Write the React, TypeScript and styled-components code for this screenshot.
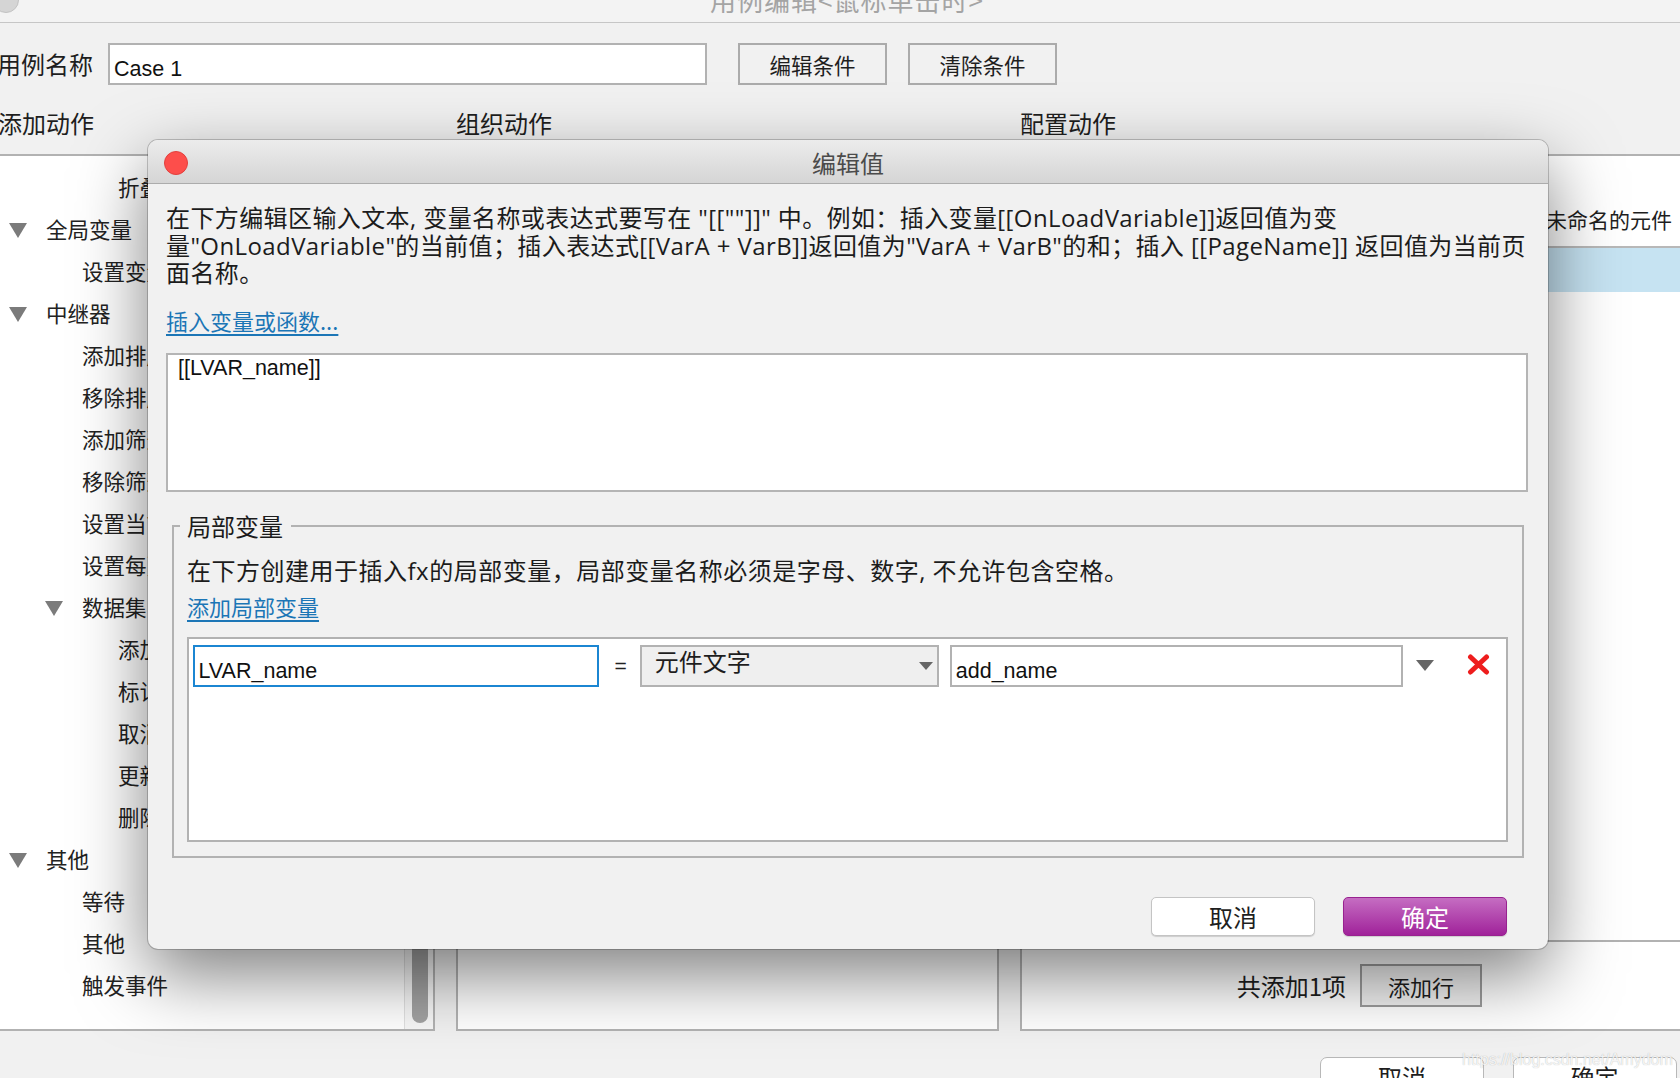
import React from 'react';
import styled, { createGlobalStyle } from 'styled-components';

const CJK = `"Noto Sans CJK SC", "Noto Sans", sans-serif`;
const LATIN = `"Liberation Sans", "Noto Sans CJK SC", sans-serif`;
const TEXT = `"Open Sans", "Noto Sans CJK SC", sans-serif`;

const GlobalStyle = createGlobalStyle`
  html, body { margin: 0; padding: 0; }
  body { background: #f1f1f1; }
  * { box-sizing: border-box; }
`;

type TreeItem = {
    label: string;
    level: number;
    open?: boolean;
};

const treeItems: Array<TreeItem> = [
    { label: '折叠全部', level: 2 },
    { label: '全局变量', level: 0, open: true },
    { label: '设置变量值', level: 1 },
    { label: '中继器', level: 0, open: true },
    { label: '添加排序', level: 1 },
    { label: '移除排序', level: 1 },
    { label: '添加筛选', level: 1 },
    { label: '移除筛选', level: 1 },
    { label: '设置当前显示页面', level: 1 },
    { label: '设置每页项目数量', level: 1 },
    { label: '数据集', level: 1, open: true },
    { label: '添加行', level: 2 },
    { label: '标记行', level: 2 },
    { label: '取消标记', level: 2 },
    { label: '更新行', level: 2 },
    { label: '删除行', level: 2 },
    { label: '其他', level: 0, open: true },
    { label: '等待', level: 1 },
    { label: '其他', level: 1 },
    { label: '触发事件', level: 1 },
];

/* ---------- background window ---------- */

const Screen = styled.div`
    position: relative;
    width: 1680px;
    height: 1078px;
    overflow: hidden;
    background: #f1f1f1;
    font-family: ${CJK};
    color: #1e1e1e;
`;

const WindowTitleBar = styled.div`
    display: flex;
    height: 23px;
    border-bottom: 1px solid #c6c6c6;
    background: #f3f3f3;
`;

const WindowDot = styled.span`
    flex: none;
    width: 26px;
    height: 26px;
    margin: -13px 0 0 -7px;
    border-radius: 50%;
    background: #d5d5d5;
    border: 1px solid #c2c2c2;
`;

const WindowTitle = styled.div`
    flex: 1;
    margin-top: -13px;
    padding-right: 5px;
    text-align: center;
    font-size: 26px;
    line-height: 26px;
    letter-spacing: 1px;
    color: #a4a4a4;
    white-space: nowrap;
`;

const NameRow = styled.div`
    display: flex;
    align-items: center;
    height: 62px;
    padding-top: 20px;
`;

const NameLabel = styled.span`
    margin: 0 15px 0 -3px;
    font-size: 24px;
    line-height: 30px;
    white-space: nowrap;
`;

const Field = styled.div<{ $width: number }>`
    display: flex;
    align-items: center;
    width: ${(p) => p.$width}px;
    height: 42px;
    padding: 11px 4px 0;
    border: 2px solid #b2b2b2;
    background: #fff;
    font-family: ${LATIN};
    font-size: 21.5px;
    color: #111;
    white-space: nowrap;
`;

const ToolButton = styled.button<{ $gap: number }>`
    width: 149px;
    height: 42px;
    margin-left: ${(p) => p.$gap}px;
    border: 2px solid #ababab;
    background: transparent;
    font-family: ${CJK};
    font-size: 21.5px;
    color: #1e1e1e;
    padding: 0;
`;

const Columns = styled.div`
    display: grid;
    grid-template-columns: 437px 543px 680px;
    column-gap: 21px;
    margin-left: -2px;
`;

const Column = styled.div`
    display: flex;
    flex-direction: column;
`;

const ColumnTitle = styled.div`
    display: flex;
    align-items: center;
    height: 69px;
    padding-top: 7px;
    font-size: 24px;
    line-height: 30px;
    white-space: nowrap;
`;

const Panel = styled.div`
    display: flex;
    height: 877px;
    border: 2px solid #b2b2b2;
    background: #fff;
    overflow: hidden;
`;

const ColumnPanel = styled(Panel)`
    flex-direction: column;
`;

const Tree = styled.div`
    flex: 1;
    padding-top: 9px;
`;

const TreeRow = styled.div<{ $level: number }>`
    display: flex;
    align-items: center;
    height: 42px;
    padding-left: ${(p) => 9 + p.$level * 36}px;
    font-size: 21.5px;
    white-space: nowrap;
    color: #222;
`;

const Caret = styled.span`
    flex: none;
    width: 0;
    height: 0;
    margin: 4px 19px 0 0;
    border-left: 9px solid transparent;
    border-right: 9px solid transparent;
    border-top: 15px solid #7b7b7b;
`;

const CaretSpace = styled.span`
    flex: none;
    width: 37px;
`;

const ScrollTrack = styled.div`
    display: flex;
    flex-direction: column;
    width: 29px;
    padding: 0 5px 6px 7px;
    border-left: 1px solid #e0e0e0;
    background: #f7f7f7;
`;

const ScrollThumb = styled.div`
    margin-top: auto;
    height: 420px;
    border-radius: 8px;
    background: #a2a2a2;
`;

const ListToolbar = styled.div`
    height: 44px;
`;

const ListHeader = styled.div`
    display: flex;
    align-items: center;
    height: 48px;
    padding: 0 0 8px 524px;
    border-bottom: 2px solid #b8b8b8;
    font-size: 21px;
    white-space: nowrap;
`;

const SelectedRow = styled.div`
    height: 44px;
    background: #c6e3f2;
`;

const ElementList = styled.div`
    flex: 1;
    display: flex;
    flex-direction: column;
    border-bottom: 2px solid #b2b2b2;
`;

const ListFooter = styled.div`
    display: flex;
    align-items: center;
    justify-content: flex-end;
    gap: 14px;
    height: 87px;
    padding-right: 216px;
    font-size: 24px;
    white-space: nowrap;
`;

const AddRowButton = styled.button`
    width: 122px;
    height: 43px;
    padding: 0;
    border: 2px solid #9c9c9c;
    background: #f0f0f0;
    font-family: ${CJK};
    font-size: 22px;
    color: #1e1e1e;
`;

const Footer = styled.div`
    display: flex;
    justify-content: flex-end;
    gap: 28.5px;
    padding: 26px 3.5px 0 0;
`;

const FooterButton = styled.button`
    width: 164px;
    height: 40px;
    padding: 0;
    border: 1px solid #b8b8b8;
    border-radius: 7px;
    background: #fff;
    font-family: ${CJK};
    font-size: 24px;
    line-height: 1;
    color: #1e1e1e;
`;

const Watermark = styled.span`
    position: absolute;
    left: 1462px;
    top: 1051px;
    font-family: ${LATIN};
    font-size: 16px;
    line-height: 18px;
    color: rgba(255, 255, 255, 0.85);
    text-shadow: 0 0 1px rgba(0, 0, 0, 0.3);
    white-space: nowrap;
`;

/* ---------- dialog ---------- */

const Dialog = styled.div`
    position: absolute;
    left: 148px;
    top: 140px;
    width: 1400px;
    height: 809px;
    display: flex;
    flex-direction: column;
    overflow: hidden;
    border-radius: 10px;
    background: #f1f1f1;
    box-shadow: 0 26px 70px rgba(0, 0, 0, 0.5), 0 0 0 1px rgba(0, 0, 0, 0.2);
`;

const DialogTitleBar = styled.div`
    display: grid;
    grid-template-columns: 1fr auto 1fr;
    align-items: center;
    flex: none;
    height: 44px;
    padding-top: 2px;
    border-bottom: 1px solid #acacac;
    background: linear-gradient(#ececec, #d5d5d5);
`;

const CloseDot = styled.span`
    width: 24px;
    height: 24px;
    margin-left: 16px;
    border-radius: 50%;
    background: #fd4e4b;
    border: 1px solid #e2403d;
`;

const DialogTitle = styled.span`
    font-size: 24px;
    line-height: 30px;
    color: #4b4b4b;
`;

const DialogBody = styled.div`
    flex: 1;
    display: flex;
    flex-direction: column;
    padding: 20px 20px 0 18px;
`;

const Description = styled.div`
    font-family: ${TEXT};
    font-size: 24px;
    line-height: 27.5px;
    letter-spacing: 0.4px;
    color: #1c1c1c;
    white-space: nowrap;
`;

const LinkText = styled.a<{ $top: number }>`
    align-self: flex-start;
    margin-top: ${(p) => p.$top}px;
    font-family: ${CJK};
    font-size: 22px;
    line-height: 28px;
    color: #1c76b6;
    text-decoration: underline;
    text-underline-offset: 4px;
    white-space: nowrap;
    cursor: pointer;
`;

const Editor = styled.textarea`
    flex: none;
    margin-top: 19px;
    width: 100%;
    height: 139px;
    padding: 2px 10px;
    border: 2px solid #b5b5b5;
    background: #fff;
    font-family: ${LATIN};
    font-size: 21.5px;
    line-height: 22px;
    color: #111;
    resize: none;
    outline: none;
`;

const GroupBox = styled.fieldset`
    min-width: 0;
    margin: 20px 4px 0 6px;
    padding: 17px 14px 14px 13px;
    border: 2px solid #b2b2b2;
`;

const GroupLegend = styled.legend`
    margin-left: -7px;
    padding: 0 8px 0 7px;
    font-size: 24px;
    line-height: 28px;
    color: #1c1c1c;
`;

const GroupText = styled.div`
    font-family: ${TEXT};
    font-size: 24px;
    line-height: 28px;
    letter-spacing: 0.5px;
    color: #1c1c1c;
    white-space: nowrap;
`;

const GroupLink = styled(LinkText)`
    display: inline-block;
`;

const VarList = styled.div`
    margin-top: 16px;
    height: 205px;
    padding: 6px 0 0 3.5px;
    border: 2px solid #b2b2b2;
    background: #fff;
`;

const VarRow = styled.div`
    display: flex;
    align-items: center;
    height: 42px;
`;

const NameField = styled(Field)`
    border-color: #1b86d2;
`;

const Equals = styled.span`
    padding: 0 13px 0 16px;
    font-family: ${LATIN};
    font-size: 21px;
    color: #222;
`;

const Select = styled.div`
    display: flex;
    align-items: center;
    width: 299px;
    height: 42px;
    padding: 0 4px 0 13px;
    border: 2px solid #b2b2b2;
    background: #efefef;
`;

const SelectText = styled.span`
    margin-bottom: 10px;
    font-size: 24px;
    line-height: 28px;
    white-space: nowrap;
`;

const Arrow = styled.span<{ $size: number; $left: number }>`
    flex: none;
    width: 0;
    height: 0;
    margin-left: ${(p) => (p.$left < 0 ? 'auto' : `${p.$left}px`)};
    border-left: ${(p) => p.$size / 2}px solid transparent;
    border-right: ${(p) => p.$size / 2}px solid transparent;
    border-top: ${(p) => Math.round(p.$size * 0.6)}px solid #666;
`;

const ValueField = styled(Field)`
    margin-left: 11px;
`;

const DeleteIcon = styled.svg`
    flex: none;
    margin-left: 33px;
    margin-bottom: 2px;
`;

const DialogButtons = styled.div`
    display: flex;
    justify-content: flex-end;
    gap: 28px;
    margin: auto 21px 13px 0;
`;

const DialogButton = styled.button<{ $primary?: boolean }>`
    width: 164px;
    height: 39px;
    padding: 0;
    border-radius: 5px;
    border: 1px solid ${(p) => (p.$primary ? '#98228f' : '#c4c4c4')};
    background: ${(p) => (p.$primary ? 'linear-gradient(#c56dc2, #a0229a)' : '#fff')};
    box-shadow: 0 1px 1px rgba(0, 0, 0, 0.15);
    font-family: ${CJK};
    font-size: 24px;
    line-height: 1;
    color: ${(p) => (p.$primary ? '#fff' : '#1e1e1e')};
`;

const App = () => {
    return (
        <>
            <GlobalStyle />
            <Screen>
                <WindowTitleBar>
                    <WindowDot />
                    <WindowTitle>用例编辑&lt;鼠标单击时&gt;</WindowTitle>
                </WindowTitleBar>
                <NameRow>
                    <NameLabel>用例名称</NameLabel>
                    <Field $width={599}>Case 1</Field>
                    <ToolButton $gap={31}>编辑条件</ToolButton>
                    <ToolButton $gap={21}>清除条件</ToolButton>
                </NameRow>
                <Columns>
                    <Column>
                        <ColumnTitle>添加动作</ColumnTitle>
                        <Panel>
                            <Tree>
                                {treeItems.map((item, index) => (
                                    <TreeRow key={index} $level={item.level}>
                                        {item.open ? <Caret /> : <CaretSpace />}
                                        {item.label}
                                    </TreeRow>
                                ))}
                            </Tree>
                            <ScrollTrack>
                                <ScrollThumb />
                            </ScrollTrack>
                        </Panel>
                    </Column>
                    <Column>
                        <ColumnTitle>组织动作</ColumnTitle>
                        <Panel />
                    </Column>
                    <Column>
                        <ColumnTitle>配置动作</ColumnTitle>
                        <ColumnPanel>
                            <ElementList>
                                <ListToolbar />
                                <ListHeader>未命名的元件</ListHeader>
                                <SelectedRow />
                            </ElementList>
                            <ListFooter>
                                共添加1项
                                <AddRowButton>添加行</AddRowButton>
                            </ListFooter>
                        </ColumnPanel>
                    </Column>
                </Columns>
                <Footer>
                    <FooterButton>取消</FooterButton>
                    <FooterButton>确定</FooterButton>
                </Footer>
                <Watermark>https://blog.csdn.net/Amydom</Watermark>

                <Dialog>
                    <DialogTitleBar>
                        <CloseDot />
                        <DialogTitle>编辑值</DialogTitle>
                        <span />
                    </DialogTitleBar>
                    <DialogBody>
                        <Description>
                            在下方编辑区输入文本, 变量名称或表达式要写在 "[[""]]" 中。例如：插入变量[[OnLoadVariable]]返回值为变
                            <br />
                            量"OnLoadVariable"的当前值；插入表达式[[VarA + VarB]]返回值为"VarA + VarB"的和；插入 [[PageName]] 返回值为当前页
                            <br />
                            面名称。
                        </Description>
                        <LinkText $top={19}>插入变量或函数...</LinkText>
                        <Editor readOnly value="[[LVAR_name]]" />
                        <GroupBox>
                            <GroupLegend>局部变量</GroupLegend>
                            <GroupText>在下方创建用于插入fx的局部变量，局部变量名称必须是字母、数字, 不允许包含空格。</GroupText>
                            <GroupLink $top={7}>添加局部变量</GroupLink>
                            <VarList>
                                <VarRow>
                                    <NameField $width={406}>LVAR_name</NameField>
                                    <Equals>=</Equals>
                                    <Select>
                                        <SelectText>元件文字</SelectText>
                                        <Arrow $size={14} $left={-1} />
                                    </Select>
                                    <ValueField $width={453}>add_name</ValueField>
                                    <Arrow $size={18} $left={13} />
                                    <DeleteIcon width="23" height="21" viewBox="0 0 23 21">
                                        <path d="M3.5 3 L19.5 18 M19.5 3 L3.5 18" stroke="#ee1d1d" strokeWidth="5" strokeLinecap="round" fill="none" />
                                    </DeleteIcon>
                                </VarRow>
                            </VarList>
                        </GroupBox>
                        <DialogButtons>
                            <DialogButton>取消</DialogButton>
                            <DialogButton $primary>确定</DialogButton>
                        </DialogButtons>
                    </DialogBody>
                </Dialog>
            </Screen>
        </>
    );
};

export default App;
